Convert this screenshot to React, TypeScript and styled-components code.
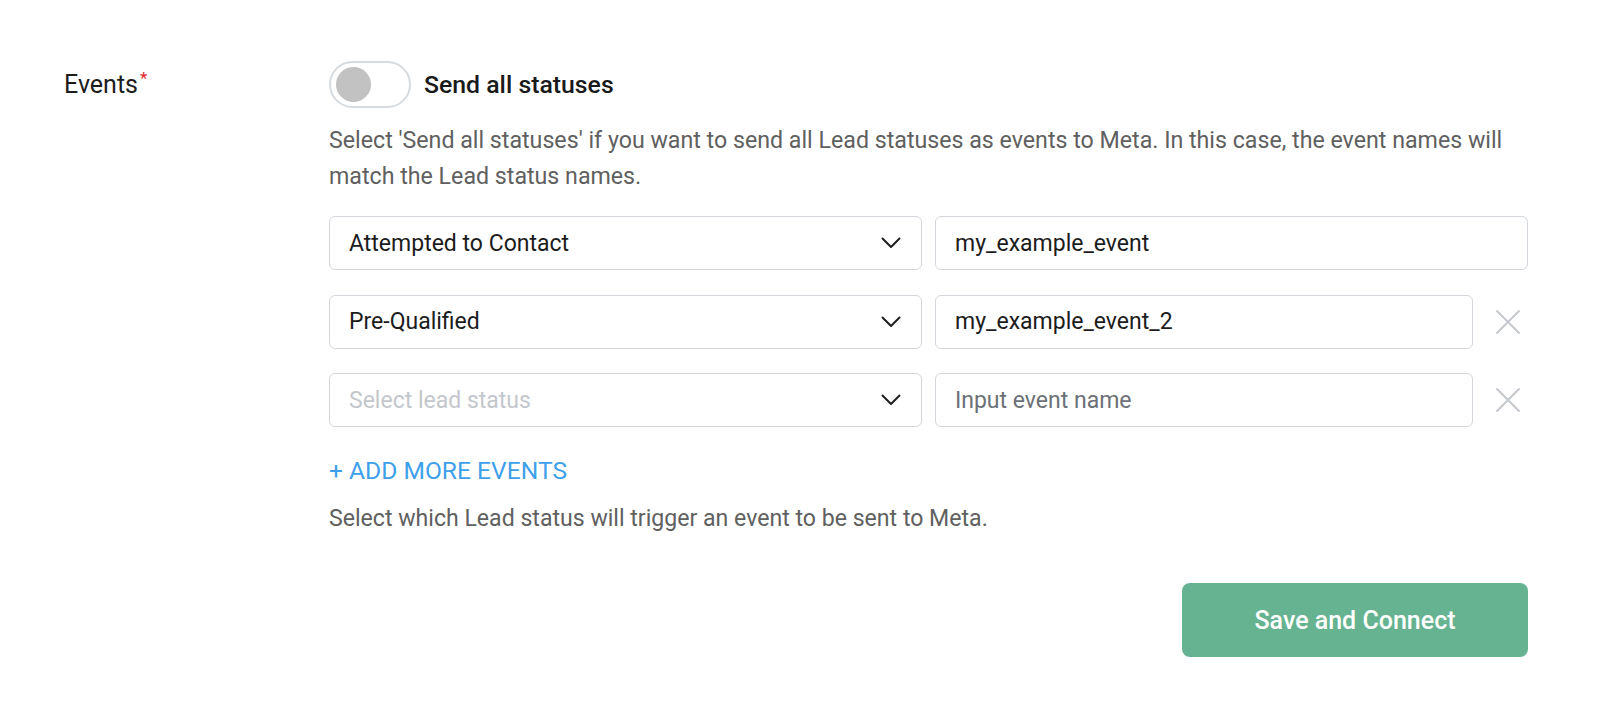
import React from "react";
import styled, { createGlobalStyle } from "styled-components";

interface EventRowData {
  status: string;
  event: string;
  removable: boolean;
}

const rows: EventRowData[] = [
  { status: "Attempted to Contact", event: "my_example_event", removable: false },
  { status: "Pre-Qualified", event: "my_example_event_2", removable: true },
  { status: "", event: "", removable: true },
];

const Chevron = (): JSX.Element => (
  <svg width="20" height="12" viewBox="0 0 20 12" fill="none">
    <polyline points="1.5,1.5 10,10 18.5,1.5" stroke="#1f1f1f" strokeWidth="2" strokeLinecap="round" strokeLinejoin="round" />
  </svg>
);

const Cross = (): JSX.Element => (
  <svg width="24" height="24" viewBox="0 0 24 24" fill="none">
    <path d="M1 1 23 23M23 1 1 23" stroke="#c4c8cd" strokeWidth="2" strokeLinecap="round" />
  </svg>
);

const App = (): JSX.Element => {
  return (
    <>
      <GlobalStyle />
      <Page>
        <FieldRow>
          <Label>
            Events<Required>*</Required>
          </Label>
          <Content>
            <ToggleRow>
              <Toggle role="switch" aria-checked={false}>
                <Knob />
              </Toggle>
              <ToggleText>Send all statuses</ToggleText>
            </ToggleRow>
            <Help>
              Select 'Send all statuses' if you want to send all Lead statuses as events to Meta. In this case, the event
              names will match the Lead status names.
            </Help>
            <Rows>
              {rows.map((row, i) => (
                <EventRow key={i} $removable={row.removable}>
                  <SelectBox>
                    <SelectValue $placeholder={!row.status}>{row.status || "Select lead status"}</SelectValue>
                    <Chevron />
                  </SelectBox>
                  <EventInput defaultValue={row.event} placeholder="Input event name" />
                  {row.removable && (
                    <RemoveBtn aria-label="Remove">
                      <Cross />
                    </RemoveBtn>
                  )}
                </EventRow>
              ))}
            </Rows>
            <AddLink>+ ADD MORE EVENTS</AddLink>
            <BottomHelp>Select which Lead status will trigger an event to be sent to Meta.</BottomHelp>
            <Actions>
              <SaveBtn>Save and Connect</SaveBtn>
            </Actions>
          </Content>
        </FieldRow>
      </Page>
    </>
  );
};

export default App;

const GlobalStyle = createGlobalStyle`
  * { box-sizing: border-box; }
  body {
    margin: 0;
    background: #ffffff;
    font-family: Roboto, "Liberation Sans", Arial, sans-serif;
    color: #1c1c1c;
  }
`;

const Page = styled.div`
  padding: 61px 72px 0 64px;
`;

const FieldRow = styled.div`
  display: grid;
  grid-template-columns: 265px 1fr;
`;

const Label = styled.div`
  font-size: 25px;
  line-height: 47px;
  color: #1c1c1c;
`;

const Required = styled.sup`
  color: #e0262b;
  font-size: 17px;
  margin-left: 2px;
  vertical-align: 9px;
  line-height: 0;
`;

const Content = styled.div`
  display: flex;
  flex-direction: column;
`;

const ToggleRow = styled.div`
  display: flex;
  align-items: center;
  gap: 13px;
`;

const Toggle = styled.div`
  width: 82px;
  height: 47px;
  border: 2px solid #d6dbe0;
  border-radius: 24px;
  display: flex;
  align-items: center;
  padding-left: 5px;
`;

const Knob = styled.span`
  width: 35px;
  height: 35px;
  border-radius: 50%;
  background: #c2c2c2;
`;

const ToggleText = styled.span`
  font-size: 24.8px;
  font-weight: 500;
  color: #1a1a1a;
`;

const Help = styled.p`
  margin: 14px 0 0;
  font-size: 23.2px;
  line-height: 36px;
  color: #606060;
`;

const Rows = styled.div`
  display: flex;
  flex-direction: column;
  gap: 24.5px;
  margin-top: 22px;
`;

const EventRow = styled.div<{ $removable: boolean }>`
  display: grid;
  grid-template-columns: ${({ $removable }) => ($removable ? "593px 1fr 42px" : "593px 1fr")};
  column-gap: 13px;
  align-items: center;
`;

const fieldBox = `
  height: 54px;
  border: 1.5px solid #d3d7dc;
  border-radius: 6px;
  background: #fff;
  font-family: Roboto, "Liberation Sans", Arial, sans-serif;
  font-size: 23px;
`;

const SelectBox = styled.div`
  ${fieldBox};
  display: flex;
  align-items: center;
  justify-content: space-between;
  padding: 0 20px 0 19px;
`;

const SelectValue = styled.span<{ $placeholder: boolean }>`
  color: ${({ $placeholder }) => ($placeholder ? "#c3c7cc" : "#1c1c1c")};
`;

const EventInput = styled.input`
  ${fieldBox};
  width: 100%;
  padding: 0 19px;
  color: #1c1c1c;
  outline: none;

  &::placeholder {
    color: #6c7077;
  }
`;

const RemoveBtn = styled.button`
  display: flex;
  justify-content: flex-end;
  padding: 0 8px 0 0;
  border: none;
  background: none;
  cursor: pointer;
`;

const AddLink = styled.a`
  margin-top: 29px;
  font-size: 24.6px;
  line-height: 30px;
  color: #3ea0ea;
  cursor: pointer;
`;

const BottomHelp = styled.p`
  margin: 15px 0 0;
  font-size: 23.1px;
  line-height: 36px;
  color: #606060;
`;

const Actions = styled.div`
  display: flex;
  justify-content: flex-end;
  margin-top: 46px;
`;

const SaveBtn = styled.button`
  width: 346px;
  height: 74px;
  border: none;
  border-radius: 8px;
  background: #65b391;
  color: #ffffff;
  font-family: Roboto, "Liberation Sans", Arial, sans-serif;
  font-size: 25px;
  font-weight: 500;
  cursor: pointer;
`;
